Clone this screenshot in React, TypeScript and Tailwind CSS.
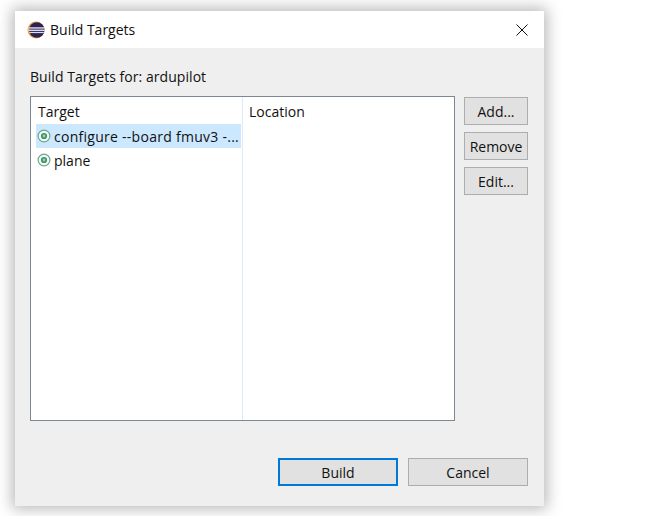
import React from "react";

const font = { fontFamily: '"Open Sans", "Noto Sans", sans-serif' };

function Btn({ label, primary, wide }: { label: string; primary?: boolean; wide?: boolean }) {
  return (
    <button
      className={
        "h-[28px] flex items-center justify-center bg-[#e1e1e1] text-[14px] text-[#111] " +
        (wide ? "w-[120px] " : "w-[64px] ") +
        (primary ? "border-2 border-[#0078d7]" : "border border-[#adadad]")
      }
    >
      {label}
    </button>
  );
}

function TargetIcon() {
  return (
    <svg width="14" height="14" viewBox="0 0 14 14" className="shrink-0">
      <circle cx="7" cy="7" r="5.9" fill="#f4f9f6" stroke="#6ba58c" strokeWidth="1.2" />
      <circle cx="7" cy="7" r="3.1" fill="#3c9467" />
      <circle cx="7" cy="7" r="1.4" fill="#9fd0b2" />
    </svg>
  );
}

function EclipseIcon() {
  return (
    <svg width="18" height="18" viewBox="0 0 18 18">
      <circle cx="9" cy="9" r="8.5" fill="#e9a23b" />
      <circle cx="9.8" cy="9" r="7.8" fill="#2c2255" />
      <rect x="1.5" y="6.3" width="16" height="1.3" fill="#eeeef6" />
      <rect x="1.2" y="8.6" width="16.6" height="1.3" fill="#eeeef6" />
      <rect x="2.2" y="10.9" width="14.6" height="1.2" fill="#dcdcea" />
    </svg>
  );
}

export default function App() {
  return (
    <div className="w-[646px] h-[516px] bg-white overflow-hidden pt-[11px] pl-[15px]" style={font}>
      <div className="w-[529px] h-[495px] bg-[#efefef] flex flex-col shadow-[0_0_14px_3px_rgba(0,0,0,0.28)]">
        <div className="h-[37px] bg-white flex items-center pl-[12px] shrink-0">
          <EclipseIcon />
          <span className="ml-[5px] text-[14px] text-[#111]">Build Targets</span>
          <svg width="12" height="12" viewBox="0 0 12 12" className="ml-auto mr-[16px]">
            <path d="M0.5 0.5 L11.5 11.5 M11.5 0.5 L0.5 11.5" stroke="#111" strokeWidth="1" fill="none" />
          </svg>
        </div>
        <div className="flex-1 pl-[15px] pr-[16px] flex flex-col">
          <div className="h-[20px] mt-[18px] flex items-center text-[14px] tracking-[0.05px] text-[#111]">Build Targets for: ardupilot</div>
          <div className="flex mt-[10px]">
            <div className="w-[425px] h-[325px] border border-[#7e8794] bg-white flex text-[14px] text-[#111]">
              <div className="w-[212px] h-full border-r border-[#dcebfb] flex flex-col pl-[5px]">
                <div className="h-[27px] flex items-center pl-[2px] pt-[1px]">Target</div>
                <div className="h-[24px] w-[205px] bg-[#cce8ff] flex items-center pl-[1px] gap-[3px] whitespace-nowrap">
                  <TargetIcon />
                  <span className="tracking-[0.27px]">configure --board fmuv3 -...</span>
                </div>
                <div className="h-[24px] flex items-center pl-[1px] gap-[3px]">
                  <TargetIcon />
                  <span>plane</span>
                </div>
              </div>
              <div className="flex-1 pl-[6px]">
                <div className="h-[27px] flex items-center pt-[1px]">Location</div>
              </div>
            </div>
            <div className="ml-[9px] mt-[1px] flex flex-col gap-[7px]">
              <Btn label="Add..." />
              <Btn label="Remove" />
              <Btn label="Edit..." />
            </div>
          </div>
          <div className="flex justify-end gap-[10px] mt-[37px]">
            <Btn label="Build" primary wide />
            <Btn label="Cancel" wide />
          </div>
        </div>
      </div>
    </div>
  );
}
